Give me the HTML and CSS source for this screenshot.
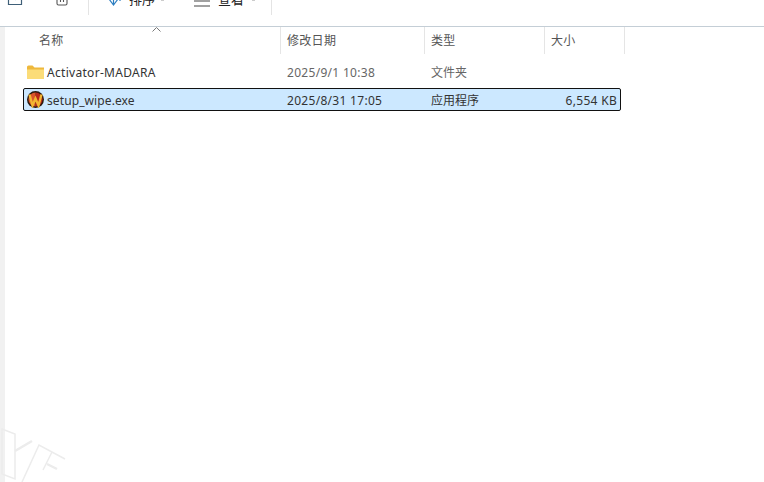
FILE: index.html
```html
<!DOCTYPE html>
<html lang="zh">
<head>
<meta charset="utf-8">
<title>文件夹</title>
<link rel="stylesheet" href="styles.css">
</head>
<body>
<div class="toolbar">
  <span class="tool first"><svg width="16" height="16" viewBox="0 0 16 16" class="ic"><path d="M1.500 3v10.500h13V9M6 3H1.500" fill="none" stroke="#3f5f78" stroke-width="1.200"/><path d="M8 9l5-7" stroke="#2b7cc0" stroke-width="1.200" fill="none"/></svg></span>
  <span class="tool trash"><svg width="14" height="16" viewBox="0 0 14 16" class="ic"><path d="M2 1v11.500q0 1.500 1.500 1.500h7q1.500 0 1.500-1.500V1M5.500 4v7M8.500 4v7" fill="none" stroke="#555" stroke-width="1.100"/></svg></span>
  <span class="sep"></span>
  <span class="tool sort"><svg width="16" height="16" viewBox="0 0 16 16" class="ic"><path d="M1 8l4.500 6L10 8M5.500 14V1M12 1v9" fill="none" stroke="#2f7fc1" stroke-width="1.200"/></svg><span class="lbl">排序</span><i class="caret"></i></span>
  <span class="tool view"><svg width="16" height="14" viewBox="0 0 16 14" class="ic"><path d="M0 8h16M0 13h16" stroke="#444" stroke-width="1.100"/></svg><span class="lbl">查看</span><i class="caret"></i></span>
  <span class="sep"></span>
  <span class="more">•••</span>
</div>
<div class="main">
  <div class="strip"></div>
  <div class="list">
    <div class="head">
      <div class="hcell name">名称<svg class="chev" width="9" height="5" viewBox="0 0 9 5"><path d="M.5 4.500l4-4 4 4" fill="none" stroke="#777"/></svg></div>
      <div class="hcell">修改日期</div>
      <div class="hcell">类型</div>
      <div class="hcell">大小</div>
    </div>
    <div class="row">
      <div class="cell name"><svg width="17" height="14" viewBox="0 0 17 14"><path d="M0 2q0-1.500 1.500-1.500h4l2 2H17V14H1.500Q0 14 0 12.500z" fill="#eeb83c"/><path d="M0 4.500h17V14H1.500Q0 14 0 12.500z" fill="#fbdc78"/></svg><span class="lat">Activator-MADARA</span></div>
      <div class="cell muted lat">2025/9/1 10:38</div>
      <div class="cell muted">文件夹</div>
      <div class="cell"></div>
    </div>
    <div class="row selected">
      <div class="cell name"><svg width="17" height="17" viewBox="0 0 17 17"><circle cx="8.500" cy="8.500" r="8.500" fill="#2a1a10"/><path d="M8.500 1.500a7 7 0 0 1 0 14z" fill="#b8281a"/><path d="M8.500 1.500a7 7 0 0 0 0 14z" fill="#d9552a"/><path d="M2.500 3.500l3 11 3-7 3 7 3-11" fill="none" stroke="#f2b632" stroke-width="2.400"/></svg><span class="tight">setup_wipe.exe</span></div>
      <div class="cell lat">2025/8/31 17:05</div>
      <div class="cell">应用程序</div>
      <div class="cell size lat">6,554 KB</div>
    </div>
  </div>
</div>
<svg class="mark" width="70" height="62" viewBox="0 0 70 62"><path d="M2 9l13 5v45L2 54zM22 62l17-37 26 14M52 32l-9 18" fill="none" stroke="#ececec" stroke-width="1.500"/><path d="M15 31l17-10M47 44l10 5" fill="none" stroke="#ececec" stroke-width="2.500"/></svg>
</body>
</html>
```
FILE: styles.css
```css
* { box-sizing: border-box; }
html, body { height: 100%; }
body {
  margin: 0;
  background: #fff;
  color: #333;
  font: 12px/16px "Noto Sans", "Noto Sans CJK SC", sans-serif;
  overflow: hidden;
  display: flex;
  flex-direction: column;
}
.toolbar {
  height: 27px;
  flex: none;
  display: flex;
  align-items: flex-start;
  border-bottom: 1px solid #c4ced6;
  overflow: hidden;
  background: #fff;
}
.tool { display: flex; align-items: flex-end; margin-top: -9px; height: 16px; color: #222; }
.ic { flex: none; }
.first { margin-left: 7px; }
.trash { margin-left: 32px; }
.sep { width: 1px; height: 15px; background: #e4e4e4; }
.trash + .sep { margin-left: 19px; }
.sort { margin-left: 19px; gap: 5px; }
.lbl { font-size: 13px; }
.caret { width: 3px; height: 3px; margin-left: 1px; background: #ccc; align-self: center; }
.view { margin-left: 30px; gap: 8px; }
.view .caret { margin-left: 0; }
.view + .sep { margin-left: 16px; }
.more { margin: -9px 0 0 16px; font-size: 9px; color: #222; }
.main { flex: 1; display: flex; min-height: 0; }
.strip { width: 5px; background: #f1f1f1; flex: none; }
.list { flex: 1; padding-left: 18px; }
.head { display: grid; grid-template-columns: 258px 144px 120px 80px; height: 27px; }
.row { display: grid; grid-template-columns: 256px 144px 120px 76px; }
.hcell {
  position: relative;
  border-right: 1px solid #e5e5e5;
  padding: 6px 0 0 6px;
  color: #555;
  letter-spacing: .3px;
}
.hcell.name { padding-left: 16px; }
.chev { position: absolute; left: 129px; top: 0; }
.row { height: 23px; width: 598px; align-items: center; border: 1px solid transparent; margin-top: 6px; }
.row + .row { margin-top: 5px; }
.row.selected { background: #cce8ff; border: 1px solid #111; border-radius: 2px; }
.cell { padding: 3px 0 0 7px; white-space: nowrap; }
.cell.name { display: flex; align-items: center; gap: 3px; padding: 0 0 0 3px; }
.cell.name span { padding-top: 3px; }
.lat { letter-spacing: .3px; }
.tight { letter-spacing: .1px; }
.muted { color: #666; }
.size { text-align: right; padding-right: 3px; }
.mark { position: absolute; left: 0; bottom: 0; }
```
